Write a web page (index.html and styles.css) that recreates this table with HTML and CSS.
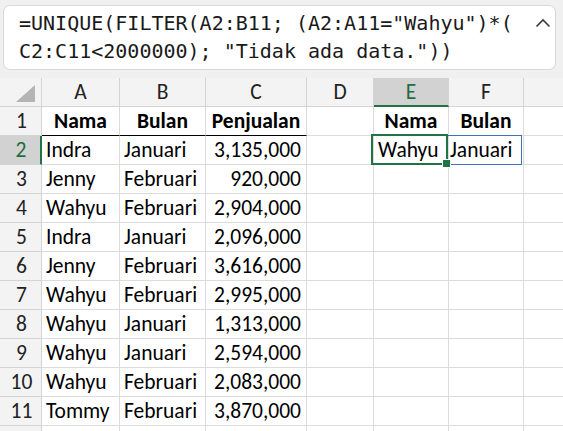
FILE: index.html
```html
<!DOCTYPE html>
<html>
<head>
<meta charset="utf-8">
<link rel="stylesheet" href="styles.css">
</head>
<body>
<div class="topbar">
  <div class="formula">
    <div class="ftext">=UNIQUE(FILTER(A2:B11; (A2:A11="Wahyu")*(<br>C2:C11&lt;2000000); "Tidak ada data."))</div>
    <svg class="chev" width="16" height="10" viewBox="0 0 16 10"><path d="M1.5 8.5 L8 2 L14.5 8.5" fill="none" stroke="#3a3a3a" stroke-width="1.6"/></svg>
  </div>
</div>
<div class="sheet">
  <div class="ch corner"><span class="tri"></span></div>
  <div class="ch">A</div><div class="ch">B</div><div class="ch">C</div><div class="ch">D</div><div class="ch sel">E</div><div class="ch">F</div><div class="ch"></div>

  <div class="rh">1</div>
  <div class="c b hb">Nama</div><div class="c b hb">Bulan</div><div class="c b hb">Penjualan</div><div class="c"></div><div class="c b">Nama</div><div class="c b">Bulan</div><div class="c"></div>

  <div class="rh rsel">2</div>
  <div class="c">Indra</div><div class="c">Januari</div><div class="c n">3,135,000</div><div class="c"></div><div class="c e2">Wahyu</div><div class="c f2">Januari</div><div class="c"></div>

  <div class="rh">3</div>
  <div class="c">Jenny</div><div class="c">Februari</div><div class="c n">920,000</div><div class="c"></div><div class="c"></div><div class="c"></div><div class="c"></div>

  <div class="rh">4</div>
  <div class="c">Wahyu</div><div class="c">Februari</div><div class="c n">2,904,000</div><div class="c"></div><div class="c"></div><div class="c"></div><div class="c"></div>

  <div class="rh">5</div>
  <div class="c">Indra</div><div class="c">Januari</div><div class="c n">2,096,000</div><div class="c"></div><div class="c"></div><div class="c"></div><div class="c"></div>

  <div class="rh">6</div>
  <div class="c">Jenny</div><div class="c">Februari</div><div class="c n">3,616,000</div><div class="c"></div><div class="c"></div><div class="c"></div><div class="c"></div>

  <div class="rh">7</div>
  <div class="c">Wahyu</div><div class="c">Februari</div><div class="c n">2,995,000</div><div class="c"></div><div class="c"></div><div class="c"></div><div class="c"></div>

  <div class="rh">8</div>
  <div class="c">Wahyu</div><div class="c">Januari</div><div class="c n">1,313,000</div><div class="c"></div><div class="c"></div><div class="c"></div><div class="c"></div>

  <div class="rh">9</div>
  <div class="c">Wahyu</div><div class="c">Januari</div><div class="c n">2,594,000</div><div class="c"></div><div class="c"></div><div class="c"></div><div class="c"></div>

  <div class="rh">10</div>
  <div class="c">Wahyu</div><div class="c">Februari</div><div class="c n">2,083,000</div><div class="c"></div><div class="c"></div><div class="c"></div><div class="c"></div>

  <div class="rh">11</div>
  <div class="c">Tommy</div><div class="c">Februari</div><div class="c n">3,870,000</div><div class="c"></div><div class="c"></div><div class="c"></div><div class="c"></div>

  <div class="rh"></div>
  <div class="c"></div><div class="c"></div><div class="c"></div><div class="c"></div><div class="c"></div><div class="c"></div><div class="c"></div>

  <div class="spill"></div>
  <div class="cursor"><span class="handle"></span></div>
</div>
</body>
</html>
```

FILE: styles.css
```css
html, body {
  margin: 0;
  padding: 0;
  background: #ffffff;
  overflow: hidden;
}
body {
  width: 563px;
  height: 431px;
}
.topbar {
  background: #f0f0f0;
  height: 78px;
  padding: 5px 7px 0 3px;
  box-sizing: border-box;
}
.formula {
  position: relative;
  background: #ffffff;
  border: 1px solid #d8d8d8;
  border-radius: 7px;
  height: 65px;
  box-sizing: border-box;
  padding: 3px 0 0 15px;
}
.ftext {
  font-family: "DejaVu Sans Mono", "Liberation Mono", monospace;
  font-size: 20px;
  line-height: 28px;
  color: #1a1a1a;
  white-space: nowrap;
}
.chev {
  position: absolute;
  right: 4px;
  top: 12px;
}
.sheet {
  position: relative;
  display: grid;
  grid-template-columns: 40px 78px 86px 101px 67px 75px 75px 41px;
  grid-auto-rows: 29px;
  border-left: 2px solid #217346;
  font-family: Calibri, Carlito, Lato, sans-serif;
  font-size: 21.5px;
  color: #000;
}
.sheet > div {
  box-sizing: border-box;
  line-height: 28px;
  white-space: nowrap;
}
.ch, .rh {
  background: #f3f3f3;
  color: #222;
  text-align: center;
  border-right: 1px solid #d4d4d4;
  border-bottom: 1px solid #d4d4d4;
}
.rh {
  margin-left: -2px;
  padding-left: 2px;
}
.ch.corner {
  position: relative;
  margin-left: -2px;
}
.tri {
  position: absolute;
  left: 16px;
  top: 7px;
  width: 0;
  height: 0;
  border-left: 19px solid transparent;
  border-bottom: 17px solid #b4b4b4;
}
.ch.sel {
  background: #d2d2d2;
  color: #1e6e40;
  border-bottom: 2px solid #217346;
}
.rh.rsel {
  background: #d2d2d2;
  color: #1e6e40;
  border-right: 2px solid #217346;
}
.c {
  border-right: 1px solid #dcdcdc;
  border-bottom: 1px solid #dcdcdc;
  padding: 0 4px;
  overflow: visible;
}
.c.b {
  font-weight: bold;
  text-align: center;
}
.c.hb {
  border-bottom: 1.5px solid #000;
}
.c.n {
  text-align: right;
  padding-right: 5px;
}
.c.e2 {
  padding-left: 4px;
}
.c.f2 {
  padding-left: 1px;
}
.spill {
  position: absolute;
  left: 370px;
  top: 57px;
  width: 150px;
  height: 30px;
  border: 1px solid #3f6fc0;
  box-sizing: border-box;
}
.cursor {
  position: absolute;
  left: 369px;
  top: 56px;
  width: 77px;
  height: 31px;
  border: 2px solid #217346;
  box-sizing: border-box;
}
.handle {
  position: absolute;
  right: -5px;
  bottom: -5px;
  width: 7px;
  height: 7px;
  background: #217346;
  border: 1px solid #ffffff;
}
```
